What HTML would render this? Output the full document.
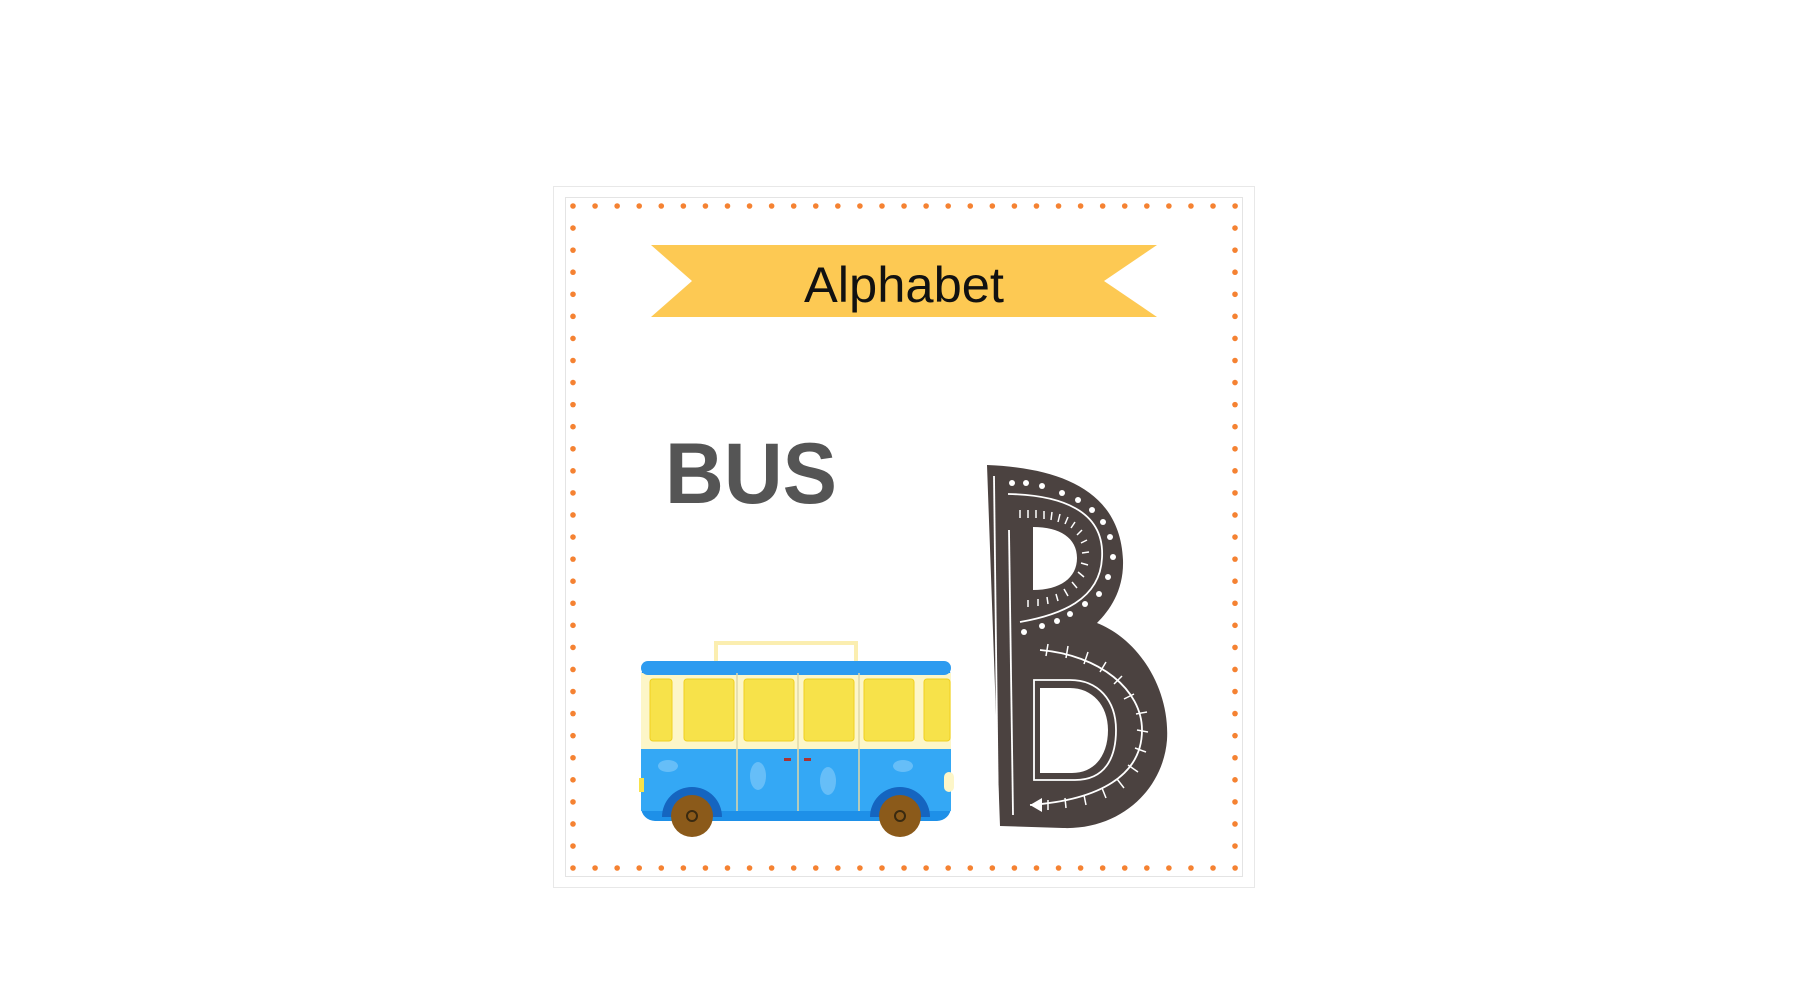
<!DOCTYPE html>
<html><head><meta charset="utf-8"><style>
html,body{margin:0;padding:0;background:#fff;width:1800px;height:1000px;overflow:hidden}
svg{position:absolute;left:0;top:0}
</style></head><body>
<svg width="1800" height="1000" viewBox="0 0 1800 1000" xmlns="http://www.w3.org/2000/svg">
<rect x="553.5" y="186.5" width="701" height="701" fill="#fff" stroke="#e8e8e8"/>
<rect x="565.5" y="197.5" width="677" height="679" fill="none" stroke="#e4e4e4"/>
<g fill="#f58232" id="dots"></g>
<!-- banner -->
<path d="M651 245 L1157 245 L1104 281 L1157 317 L651 317 L692 281 Z" fill="#fdc953"/>
<text x="904" y="302" font-family="'Liberation Sans',sans-serif" font-size="50" text-anchor="middle" fill="#111" textLength="200" lengthAdjust="spacingAndGlyphs">Alphabet</text>
<text x="665" y="503" font-family="'Liberation Sans',sans-serif" font-weight="bold" font-size="86" fill="#555" textLength="172" lengthAdjust="spacingAndGlyphs">BUS</text>
<!-- bus -->
<g transform="translate(-2,-9)">
<rect x="718" y="652" width="140" height="24" fill="none" stroke="#fbeeb0" stroke-width="4"/>
<rect x="643" y="672" width="310" height="158" rx="14" fill="#1e90e8"/>
<rect x="643" y="682" width="310" height="76" fill="#fdf6c8"/>
<rect x="643" y="670" width="310" height="14" rx="7" fill="#2d9bf0"/>
<g fill="#f7e24a" stroke="#f0d020" stroke-width="1">
<rect x="652" y="688" width="22" height="62" rx="3"/>
<rect x="686" y="688" width="50" height="62" rx="3"/>
<rect x="746" y="688" width="50" height="62" rx="3"/>
<rect x="806" y="688" width="50" height="62" rx="3"/>
<rect x="866" y="688" width="50" height="62" rx="3"/>
<rect x="926" y="688" width="26" height="62" rx="3"/>
</g>
<rect x="643" y="758" width="310" height="62" fill="#34a8f5"/>
<g fill="#7cc8fa" opacity="0.7"><ellipse cx="760" cy="785" rx="8" ry="14"/><ellipse cx="830" cy="790" rx="8" ry="14"/><ellipse cx="670" cy="775" rx="10" ry="6"/><ellipse cx="905" cy="775" rx="10" ry="6"/></g>
<g stroke="#e0d8a8" stroke-width="1.5"><line x1="739" y1="682" x2="739" y2="820"/><line x1="800" y1="682" x2="800" y2="820"/><line x1="861" y1="682" x2="861" y2="820"/></g>
<rect x="786" y="767" width="7" height="3" fill="#a33"/><rect x="806" y="767" width="7" height="3" fill="#a33"/>
<path d="M664 826 a30 30 0 0 1 60 0Z M872 826 a30 30 0 0 1 60 0Z" fill="#1565c0"/>
<circle cx="694" cy="825" r="21" fill="#8b5a1a"/><circle cx="694" cy="825" r="5" fill="none" stroke="#3a2a10" stroke-width="2"/>
<circle cx="902" cy="825" r="21" fill="#8b5a1a"/><circle cx="902" cy="825" r="5" fill="none" stroke="#3a2a10" stroke-width="2"/>
<rect x="946" y="781" width="10" height="20" rx="5" fill="#fdf6c8"/>
<rect x="641" y="787" width="5" height="14" fill="#f7e24a"/>
</g>
<!-- B -->
<path fill-rule="evenodd" fill="#4b4240" d="M987 465 C1060 468 1120 490 1123 560 C1124 590 1110 610 1097 623 C1140 640 1170 690 1167 740 C1163 790 1120 830 1063 828 L1000 826 Z
M1033 527 L1033 590 C1060 590 1077 578 1077 558 C1077 538 1060 527 1033 527 Z
M1040 688 L1040 773 L1072 773 C1095 773 1108 755 1108 730 C1108 705 1092 688 1070 688 Z"/>
<g fill="none" stroke="#fff" stroke-width="1.8">
<line x1="994" y1="476" x2="998" y2="815"/><line x1="1009" y1="530" x2="1013" y2="815"/>
<path d="M1008 494 C1060 495 1105 510 1102 558 C1100 600 1060 615 1020 622"/>
<path d="M1034 680 L1034 780 L1075 780 C1105 780 1116 758 1116 730 C1116 700 1098 680 1070 680 Z"/>
<path d="M1040 650 C1100 655 1142 690 1142 730 C1142 775 1100 800 1030 805"/>
</g>
<g stroke="#fff" stroke-width="1.5">
<line x1="1020" y1="510" x2="1020" y2="518"/><line x1="1028" y1="510" x2="1028" y2="518"/><line x1="1036" y1="510" x2="1036" y2="518"/><line x1="1044" y1="511" x2="1044" y2="519"/><line x1="1052" y1="512" x2="1051" y2="520"/><line x1="1060" y1="514" x2="1058" y2="522"/><line x1="1068" y1="517" x2="1065" y2="524"/><line x1="1075" y1="522" x2="1071" y2="528"/><line x1="1082" y1="530" x2="1077" y2="535"/><line x1="1087" y1="540" x2="1081" y2="543"/><line x1="1089" y1="552" x2="1082" y2="553"/><line x1="1088" y1="565" x2="1081" y2="563"/><line x1="1084" y1="577" x2="1078" y2="572"/><line x1="1077" y1="588" x2="1072" y2="582"/><line x1="1068" y1="596" x2="1064" y2="589"/><line x1="1058" y1="601" x2="1056" y2="594"/><line x1="1048" y1="604" x2="1047" y2="597"/><line x1="1038" y1="606" x2="1038" y2="599"/><line x1="1028" y1="607" x2="1028" y2="600"/>
<line x1="1048" y1="644" x2="1046" y2="656"/><line x1="1068" y1="646" x2="1066" y2="658"/><line x1="1088" y1="652" x2="1084" y2="664"/><line x1="1106" y1="662" x2="1100" y2="672"/><line x1="1122" y1="676" x2="1114" y2="684"/><line x1="1134" y1="694" x2="1124" y2="699"/><line x1="1147" y1="712" x2="1136" y2="714"/><line x1="1148" y1="732" x2="1137" y2="730"/><line x1="1146" y1="752" x2="1135" y2="748"/><line x1="1138" y1="772" x2="1128" y2="765"/><line x1="1124" y1="788" x2="1117" y2="779"/><line x1="1106" y1="798" x2="1102" y2="788"/><line x1="1086" y1="805" x2="1084" y2="795"/><line x1="1066" y1="808" x2="1065" y2="798"/><line x1="1048" y1="810" x2="1048" y2="800"/>
</g>
<g fill="#fff"><circle cx="1012" cy="483" r="3"/><circle cx="1026" cy="483" r="3"/><circle cx="1042" cy="486" r="3"/><circle cx="1062" cy="493" r="3"/><circle cx="1078" cy="500" r="3"/><circle cx="1092" cy="510" r="3"/><circle cx="1103" cy="522" r="3"/><circle cx="1110" cy="537" r="3"/><circle cx="1113" cy="557" r="3"/><circle cx="1108" cy="577" r="3"/><circle cx="1099" cy="594" r="3"/><circle cx="1085" cy="604" r="3"/><circle cx="1070" cy="614" r="3"/><circle cx="1057" cy="621" r="3"/><circle cx="1042" cy="626" r="3"/><circle cx="1024" cy="632" r="3"/>
<path d="M1030 805 l12 -7 l0 14 Z"/></g>
</svg>
<script>
var g=document.getElementById('dots'),s='';
for(var i=0;i<=30;i++){var x=573+i*22.07;s+='<circle cx="'+x+'" cy="206" r="2.8"/><circle cx="'+x+'" cy="868" r="2.8"/>';}
for(var j=1;j<30;j++){var y=206+j*22.07;s+='<circle cx="573" cy="'+y+'" r="2.8"/><circle cx="1235" cy="'+y+'" r="2.8"/>';}
g.innerHTML=s;
</script>
</body></html>
